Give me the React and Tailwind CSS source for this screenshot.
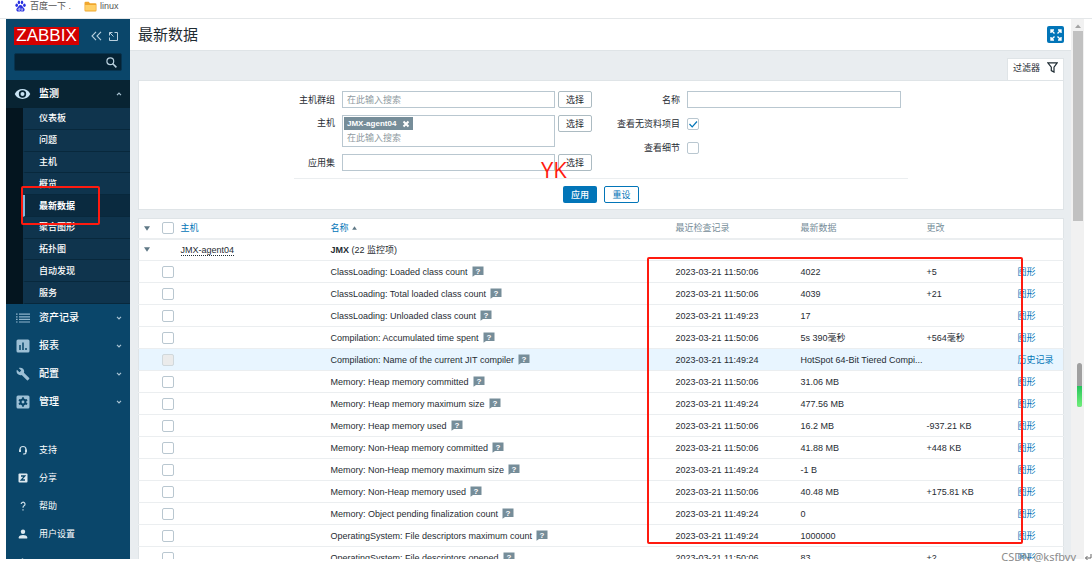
import { useState } from "react"

const submenu = ["仪表板", "问题", "主机", "概览", "最新数据", "聚合图形", "拓扑图", "自动发现", "服务"]

const items = [
  { name: "ClassLoading: Loaded class count", time: "2023-03-21 11:50:06", value: "4022", change: "+5" },
  { name: "ClassLoading: Total loaded class count", time: "2023-03-21 11:50:06", value: "4039", change: "+21" },
  { name: "ClassLoading: Unloaded class count", time: "2023-03-21 11:49:23", value: "17", change: "" },
  { name: "Compilation: Accumulated time spent", time: "2023-03-21 11:50:06", value: "5s 390毫秒", change: "+564毫秒" },
  { name: "Compilation: Name of the current JIT compiler", time: "2023-03-21 11:49:24", value: "HotSpot 64-Bit Tiered Compi...", change: "", history: true },
  { name: "Memory: Heap memory committed", time: "2023-03-21 11:50:06", value: "31.06 MB", change: "" },
  { name: "Memory: Heap memory maximum size", time: "2023-03-21 11:49:24", value: "477.56 MB", change: "" },
  { name: "Memory: Heap memory used", time: "2023-03-21 11:50:06", value: "16.2 MB", change: "-937.21 KB" },
  { name: "Memory: Non-Heap memory committed", time: "2023-03-21 11:50:06", value: "41.88 MB", change: "+448 KB" },
  { name: "Memory: Non-Heap memory maximum size", time: "2023-03-21 11:49:24", value: "-1 B", change: "" },
  { name: "Memory: Non-Heap memory used", time: "2023-03-21 11:50:06", value: "40.48 MB", change: "+175.81 KB" },
  { name: "Memory: Object pending finalization count", time: "2023-03-21 11:49:24", value: "0", change: "" },
  { name: "OperatingSystem: File descriptors maximum count", time: "2023-03-21 11:49:24", value: "1000000", change: "" },
  { name: "OperatingSystem: File descriptors opened", time: "2023-03-21 11:50:06", value: "83", change: "+2" },
]

const icons = {
  list: (
    <svg viewBox="0 0 14 10" className="w-3.5 h-2.5" stroke="#8fb4cb" strokeWidth="1.2">
      <path d="M0 1.2h1.6M3 1.2h11M0 3.8h1.6M3 3.8h11M0 6.4h1.6M3 6.4h11M0 9h1.6M3 9h11" />
    </svg>
  ),
  report: (
    <svg viewBox="0 0 14 14" className="w-3.5 h-3.5">
      <rect x="0.5" y="0.5" width="13" height="13" rx="1.5" fill="#9dc0d6" />
      <path d="M4 6v5M7 3.5V11M10 9v2" stroke="#0a466a" strokeWidth="1.5" />
    </svg>
  ),
  wrench: (
    <svg viewBox="0 0 24 24" className="w-3.5 h-3.5" fill="#9dc0d6">
      <path d="M22.7 19l-9.1-9.1c.9-2.3.4-5-1.5-6.9-2-2-5-2.4-7.4-1.3L9 6 6 9 1.6 4.7C.4 7.1.9 10.1 2.9 12.1c1.9 1.9 4.6 2.4 6.9 1.500l9.100 9.100c.4.4 1 .4 1.400 0l2.300-2.300c.5-.4.5-1.100.1-1.400z" />
    </svg>
  ),
  gear: (
    <svg viewBox="0 0 14 14" className="w-3.5 h-3.5">
      <rect x="0.5" y="0.5" width="13" height="13" rx="1.5" fill="#9dc0d6" />
      <circle cx="7" cy="7" r="2.4" fill="none" stroke="#0a466a" strokeWidth="2" />
      <path d="M7 2.3v1.8M7 9.9v1.8M2.9 4.7l1.6.9M9.5 8.4l1.6.9M2.9 9.3l1.6-.9M9.5 5.6l1.6-.9" stroke="#0a466a" strokeWidth="1.8" />
    </svg>
  ),
  headset: (
    <svg viewBox="0 0 10 10" className="w-2.5 h-2.5" fill="none" stroke="#cfe0ea" strokeWidth="1.2">
      <path d="M2 6.5V4.5a3 3 0 0 1 6 0v2.5a2 2 0 0 1-2 2H5" />
      <path d="M2 4.5v2.5M8 4.5v2.5" strokeWidth="2" />
    </svg>
  ),
  share: (
    <svg viewBox="0 0 10 10" className="w-2.5 h-2.5">
      <rect x="0.5" y="0.5" width="9" height="9" rx="1" fill="#dde9f0" />
      <path d="M3 3h3.8L3.2 7H7" fill="none" stroke="#0a466a" strokeWidth="1.3" />
    </svg>
  ),
  help: (
    <svg viewBox="0 0 10 10" className="w-2.5 h-2.5" fill="none" stroke="#cfe0ea" strokeWidth="1.2">
      <path d="M3.2 3a1.9 1.9 0 1 1 2.8 1.8C5.2 5.3 5 5.6 5 6.8M5 8.2v1.3" />
    </svg>
  ),
  user: (
    <svg viewBox="0 0 10 10" className="w-2.5 h-2.5" fill="#dde9f0">
      <circle cx="5" cy="2.8" r="2.2" />
      <path d="M0.8 9.5V8.2C0.8 6.8 3 6 5 6s4.2.8 4.2 2.2v1.3z" />
    </svg>
  ),
}

const sections = [
  { icon: "list", label: "资产记录" },
  { icon: "report", label: "报表" },
  { icon: "wrench", label: "配置" },
  { icon: "gear", label: "管理" },
]

const support = [
  { icon: "headset", label: "支持" },
  { icon: "share", label: "分享" },
  { icon: "help", label: "帮助" },
  { icon: "user", label: "用户设置" },
]

function Chevron({ up }) {
  return (
    <svg viewBox="0 0 6 4" className="w-1.5 h-1" fill="none" stroke="#a9c3d3" strokeWidth="1.2">
      <path d={up ? "M1 3.2l2-2 2 2" : "M1 .8l2 2 2-2"} />
    </svg>
  )
}

function HelpBubble() {
  return (
    <svg viewBox="0 0 12 11" className="w-3 h-[11px] shrink-0">
      <path d="M0.5 0.5h11v8.5H3L0.5 10.8z" fill="#768d99" />
      <text x="6" y="7.5" textAnchor="middle" fontSize="8" fontWeight="700" fill="#fff">?</text>
    </svg>
  )
}

function Checkbox({ id, label, checked, disabled, onChange }) {
  return (
    <span className="relative block w-3 h-3">
      <input
        id={id}
        type="checkbox"
        aria-label={label}
        checked={checked}
        disabled={disabled}
        onChange={onChange}
        className="block w-3 h-3 appearance-none rounded-xs border border-[#b9c7d0] bg-white disabled:bg-[#ebebeb] disabled:border-[#d0d8dc]"
      />
      {checked && (
        <svg viewBox="0 0 12 12" className="absolute inset-0 pointer-events-none" fill="none" stroke="#0275b8" strokeWidth="1.2">
          <path d="M2.5 6l2.7 2.8L10 3.5" />
        </svg>
      )}
    </span>
  )
}

function SelectButton() {
  return <button className="w-[34px] h-[17px] shrink-0 border border-[#acbbc2] rounded-xs bg-white text-[#1f2c33]">选择</button>
}

function Sidebar() {
  return (
    <aside className="relative w-[124px] shrink-0 bg-[#0a466a] text-white overflow-hidden">
      <div className="flex items-center pl-2 pr-3 pt-2 h-[26px]">
        <a href="#" className="w-[65px] h-[18px] leading-[18px] bg-[#d40000] text-center text-[17px]">ZABBIX</a>
        <button aria-label="收起" className="ml-3">
          <svg viewBox="0 0 11 10" className="w-[11px] h-2.5" fill="none" stroke="#b9d0de" strokeWidth="1.1">
            <path d="M5 .8L1 5l4 4.2M10 .8L6 5l4 4.2" />
          </svg>
        </button>
        <button aria-label="隐藏" className="ml-auto">
          <svg viewBox="0 0 9 9" className="w-[9px] h-[9px]" fill="none" stroke="#b9d0de">
            <path d="M5.5.5h3v8h-8v-3M.5 3.5v-3h3M.5.5l4 4" />
          </svg>
        </button>
      </div>
      <div className="mt-2 mx-2 flex items-center h-[18px] rounded-xs border border-[#07334e] bg-[#052233] pr-1">
        <input aria-label="搜索" className="flex-1 min-w-0 bg-transparent outline-none" />
        <svg viewBox="0 0 11 11" className="w-[11px] h-[11px]" fill="none" stroke="#b9d0de" strokeWidth="1.2">
          <circle cx="4.3" cy="4.3" r="3.4" />
          <path d="M6.8 6.8l3.6 3.6" strokeWidth="1.6" />
        </svg>
      </div>

      <nav className="mt-[9px]">
        <a href="#" className="flex items-center h-7 px-2 bg-[#082433] text-[10px] font-bold">
          <svg viewBox="0 0 18 12" className="w-[17px] h-3">
            <path d="M.8 6C2.5 2.5 5.5.8 9 .8S15.5 2.5 17.2 6C15.5 9.5 12.5 11.2 9 11.2S2.5 9.5.8 6z" fill="#c9e4f5" />
            <circle cx="9" cy="6" r="3" fill="#c9e4f5" stroke="#082433" strokeWidth="1.8" />
          </svg>
          <span className="ml-2 flex-1">监测</span>
          <Chevron up />
        </a>
        <ul className="flex flex-col h-[196px] pl-[17px] bg-[#04151f]">
          {submenu.map(s => (
            <li key={s} className="flex-1 flex">
              <a
                href="#"
                className={`flex-1 flex items-center border-b border-[#08283c] pl-3.5 ${
                  s === "最新数据" ? "bg-[#0a2a3f] border-l-2 border-l-[#7fb8dd] font-bold" : "bg-[#0f344d] border-l-2 border-l-[#0f344d] font-medium"
                }`}
              >
                {s}
              </a>
            </li>
          ))}
        </ul>
        {sections.map(s => (
          <a key={s.label} href="#" className="flex items-center h-7 px-2 text-[10px] font-medium">
            <span className="w-[17px] flex justify-center">{icons[s.icon]}</span>
            <span className="ml-2 flex-1">{s.label}</span>
            <Chevron />
          </a>
        ))}
      </nav>

      <nav className="mt-5">
        {support.map(s => (
          <a key={s.label} href="#" className="flex items-center h-7 px-2">
            <span className="w-[17px] flex justify-center">{icons[s.icon]}</span>
            <span className="ml-2">{s.label}</span>
          </a>
        ))}
        <a href="#" aria-label="登出" className="flex h-7 px-2 pt-2.5">
          <svg viewBox="0 0 10 10" className="w-[17px] h-2.5" fill="none" stroke="#dde9f0" strokeWidth="1.4">
            <path d="M5 .5v5M2.5 2.5a4 4 0 1 0 5 0" />
          </svg>
        </a>
      </nav>
      <div className="absolute left-[15px] top-[167px] w-[79px] h-[39px] border-2 border-[#ff1a0f] rounded-xs pointer-events-none" />
    </aside>
  )
}

function Filter() {
  const [noData, setNoData] = useState(true)
  const [details, setDetails] = useState(false)

  return (
    <section className="bg-white border border-[#dfe4e7] pt-2.5 pb-1.5">
      <div className="w-[614px] max-w-full mx-auto">
        <div className="flex justify-between pr-[7px] pb-[7px] border-b border-[#ebeef0]">
          <div className="flex flex-col gap-[7px]">
            <div className="flex items-center">
              <label htmlFor="groups" className="w-[41px] mr-[7px] text-right whitespace-nowrap">主机群组</label>
              <input id="groups" placeholder="在此输入搜索" className="w-[213px] h-[17px] mr-[3px] px-1 border border-[#b9c7d0] placeholder:text-[#8f9ba2]" />
              <SelectButton />
            </div>
            <div className="flex items-start">
              <label htmlFor="hosts" className="w-[41px] mr-[7px] leading-[17px] text-right">主机</label>
              <div className="w-[213px] h-8 mr-[3px] p-px border border-[#b9c7d0]">
                <span className="flex items-center justify-between w-[69px] h-[13px] px-[3px] bg-[#768d99] text-white text-[8px] font-bold">
                  JMX-agent04
                  <button aria-label="移除" className="shrink-0">
                    <svg viewBox="0 0 8 8" className="w-2 h-2" stroke="#fff" strokeWidth="2">
                      <path d="M1.5 1.5l5 5M6.5 1.5l-5 5" />
                    </svg>
                  </button>
                </span>
                <input id="hosts" placeholder="在此输入搜索" className="block w-full h-4 px-[3px] outline-none placeholder:text-[#8f9ba2]" />
              </div>
              <SelectButton />
            </div>
            <div className="flex items-center">
              <label htmlFor="app" className="w-[41px] mr-[7px] text-right">应用集</label>
              <input id="app" className="w-[213px] h-[17px] mr-[3px] px-1 border border-[#b9c7d0]" />
              <SelectButton />
            </div>
          </div>
          <div className="flex flex-col gap-[7px]">
            <div className="flex items-center h-[17px]">
              <label htmlFor="name" className="w-[61px] mr-[7px] text-right">名称</label>
              <input id="name" className="w-[214px] h-[17px] px-1 border border-[#b9c7d0]" />
            </div>
            <div className="flex items-center h-[17px]">
              <label htmlFor="nodata" className="w-[61px] mr-[7px] flex justify-end whitespace-nowrap">查看无资料项目</label>
              <Checkbox id="nodata" checked={noData} onChange={() => setNoData(!noData)} />
            </div>
            <div className="flex items-center h-[17px]">
              <label htmlFor="details" className="w-[61px] mr-[7px] text-right">查看细节</label>
              <Checkbox id="details" checked={details} onChange={() => setDetails(!details)} />
            </div>
          </div>
        </div>
        <div className="flex justify-center gap-[7px] pt-[7px]">
          <button className="w-[34px] h-[17px] rounded-xs bg-[#0275b8] text-white font-medium">应用</button>
          <button className="w-[35px] h-[17px] rounded-xs border border-[#0275b8] bg-white text-[#0275b8]">重设</button>
        </div>
      </div>
    </section>
  )
}

function Caret() {
  return (
    <button aria-label="折叠" className="block pl-[5px]">
      <svg viewBox="0 0 6 5" className="w-1.5 h-[5px]" fill="#5f7886">
        <path d="M0 .3h6L3 4.8z" />
      </svg>
    </button>
  )
}

function LatestData() {
  const [selected, setSelected] = useState([])

  const toggle = name =>
    setSelected(selected.includes(name) ? selected.filter(n => n !== name) : [...selected, name])

  return (
    <table className="w-full table-fixed bg-white border-x border-t border-[#dfe4e7] text-left whitespace-nowrap">
      <colgroup>
        <col className="w-[23px]" />
        <col className="w-[19px]" />
        <col className="w-[150px]" />
        <col />
        <col className="w-[125px]" />
        <col className="w-[126px]" />
        <col className="w-[91px]" />
        <col className="w-[46px]" />
      </colgroup>
      <thead>
        <tr className="h-5 border-b-2 border-[#ebeef0] text-[#768d99]">
          <th><Caret /></th>
          <th>
            <Checkbox
              label="全选"
              checked={selected.length === items.length}
              onChange={e => setSelected(e.target.checked ? items.map(i => i.name) : [])}
            />
          </th>
          <th className="font-normal"><a href="#" className="text-[#0275b8]">主机</a></th>
          <th className="font-normal">
            <a href="#" className="flex items-center gap-[3px] text-[#0275b8]">
              名称
              <svg viewBox="0 0 6 5" className="w-[5px] h-1" fill="#5f7886"><path d="M0 4.8h6L3 .2z" /></svg>
            </a>
          </th>
          <th className="font-normal">最近检查记录</th>
          <th className="font-normal">最新数据</th>
          <th className="font-normal">更改</th>
          <th></th>
        </tr>
      </thead>
      <tbody>
        <tr className="h-[22px] border-b border-[#ebeef0]">
          <td><Caret /></td>
          <td></td>
          <td><a href="#" className="border-b border-dotted border-[#1f2c33]">JMX-agent04</a></td>
          <td colSpan={5}><b>JMX</b> (22 监控项)</td>
        </tr>
        {items.map(i => (
          <tr key={i.name} className={`h-[22px] border-b border-[#ebeef0] ${i.history ? "bg-[#e8f5ff]" : ""}`}>
            <td></td>
            <td>
              <Checkbox label={i.name} checked={selected.includes(i.name)} disabled={i.history} onChange={() => toggle(i.name)} />
            </td>
            <td></td>
            <td><span className="flex items-center gap-1">{i.name}<HelpBubble /></span></td>
            <td>{i.time}</td>
            <td>{i.value}</td>
            <td>{i.change}</td>
            <td><a href="#" className="text-[#0275b8]">{i.history ? "历史记录" : "图形"}</a></td>
          </tr>
        ))}
      </tbody>
    </table>
  )
}

export default function App() {
  return (
    <div className="relative h-screen flex flex-col pb-3 bg-white text-[#1f2c33] text-[9px] leading-3 overflow-hidden font-['Liberation_Sans','Noto_Sans_CJK_SC',sans-serif]">
      <div className="flex items-start h-[19px] shrink-0 pl-[15px] border-b border-[#e4e7e9] text-[#555]">
        <a href="#" className="flex items-center gap-1">
          <svg viewBox="0 0 11 12" className="w-[11px] h-3" fill="#2932e1">
            <ellipse cx="1.7" cy="5.3" rx="1.3" ry="1.7" />
            <ellipse cx="3.9" cy="2.4" rx="1.2" ry="1.8" />
            <ellipse cx="7" cy="2.4" rx="1.2" ry="1.8" />
            <ellipse cx="9.4" cy="5.3" rx="1.3" ry="1.7" />
            <path d="M5.5 5c1.8 0 2 1.8 3.3 2.9 1.5 1.3.8 3.6-1 3.6-.8 0-1.4-.3-2.3-.3s-1.5.3-2.3.3c-1.8 0-2.5-2.3-1-3.6C3.5 6.8 3.7 5 5.5 5z" />
            <path d="M4.8 7.5v2.8H3.9a.8.8 0 0 1 0-1.6h.9M6.2 8.3v1.5c0 .4.2.5.5.5h.9v-2" fill="none" stroke="#fff" strokeWidth=".6" />
          </svg>
          百度一下 .
        </a>
        <a href="#" className="flex items-center gap-[3px] ml-[13px]">
          <svg viewBox="0 0 13 11" className="w-[13px] h-[11px]">
            <path d="M.5 2A1.2 1.2 0 0 1 1.7.8h3L6 2.2h5.3a1.2 1.2 0 0 1 1.2 1.2v5.8a1.2 1.2 0 0 1-1.2 1.2H1.7A1.2 1.2 0 0 1 .5 9.2z" fill="#f0a72e" />
            <path d="M1.2 4h10.6v5.5H1.2z" fill="#ffd067" />
          </svg>
          linux
        </a>
      </div>

      <div className="flex flex-1 min-h-0 pl-1.5 pr-2">
        <Sidebar />
        <main className="relative flex-1 min-w-0 bg-[#e9edf0] overflow-hidden">
          <header className="flex items-center justify-between h-8 pl-2 pr-[7px] bg-white border-b border-[#dfe4e7]">
            <h1 className="text-[15px] leading-5">最新数据</h1>
            <button aria-label="全屏" className="w-[17px] h-[17px] bg-[#0275b8] rounded-xs flex items-center justify-center">
              <svg viewBox="0 0 12 12" className="w-3 h-3" fill="none" stroke="#fff" strokeWidth="1.4">
                <path d="M1 4V1h3M8 1h3v3M11 8v3H8M4 11H1V8M1 1l3.500 3.500M11 1L7.500 4.500M11 11L7.500 7.500M1 11l3.500-3.500" />
              </svg>
            </button>
          </header>
          <div className="pl-2 pr-[7px]">
            <div className="flex justify-end pt-[7px]">
              <button className="flex items-center gap-[7px] h-[22px] px-[5px] pb-1 bg-white border-x border-t border-[#dfe4e7]">
                过滤器
                <svg viewBox="0 0 11 11" className="w-[11px] h-[11px]" fill="none" stroke="#1f2c33" strokeWidth="1.2">
                  <path d="M.8.8h9.4L7 5.2v4.9L4.3 8.6V5.2z" />
                </svg>
              </button>
            </div>
            <Filter />
            <div className="mt-2">
              <LatestData />
            </div>
          </div>
          <div className="absolute right-12 top-[238px] w-[376px] h-[287px] border-2 border-[#ff1a0f] rounded-xs pointer-events-none" />
          <div className="absolute left-[411px] top-[136px] text-[22px] leading-7 text-[#ff1a0f] font-['Open_Sans',sans-serif] pointer-events-none">YK</div>
        </main>

        <div className="relative w-[13px] shrink-0 bg-[#f1f1f1] flex flex-col items-center">
          <svg viewBox="0 0 6 4" className="w-1.5 h-1 mt-[5px]" fill="#a3a3a3"><path d="M0 4h6L3 .5z" /></svg>
          <div className="mt-[3px] w-2.5 h-[190px] bg-[#c1c1c1]" />
          <div className="absolute right-0.5 top-[344px] w-[5px] h-11 rounded-full overflow-hidden bg-[#a0a0a0] flex flex-col justify-end">
            <div className="h-[21px] bg-linear-to-b from-[#21c55d] to-[#6ff07a]" />
          </div>
        </div>
      </div>

      <div className="absolute right-0 bottom-2 flex items-center gap-2 text-[#8c8c8c] pointer-events-none">
        <span className="text-[11px] leading-3 font-['Noto_Sans',sans-serif]">CSDN @ksfbvv</span>
        <svg viewBox="0 0 8 8" className="w-2 h-2" fill="none" stroke="#666">
          <path d="M7 1v4H1.5M3.5 3L1.5 5l2 2" />
        </svg>
      </div>
    </div>
  )
}
